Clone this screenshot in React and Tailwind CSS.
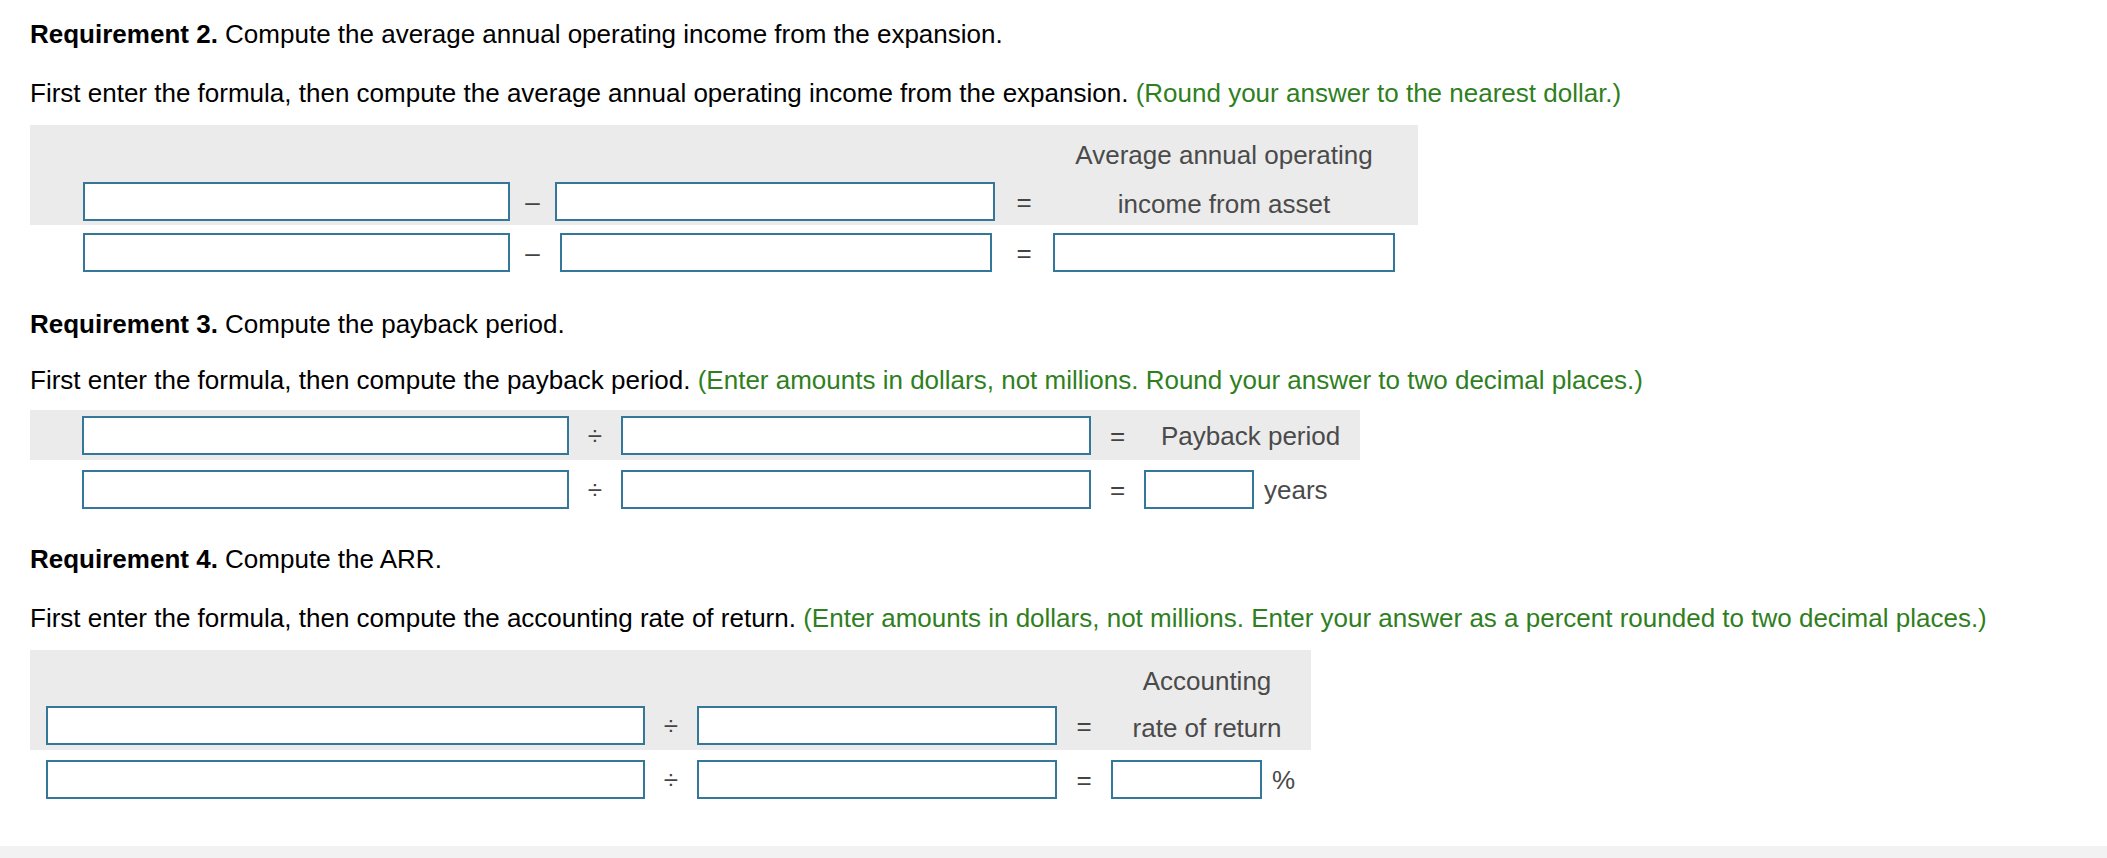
const box = 'h-[39px] border-2 border-[#357799] bg-white outline-none';
const op = 'flex items-center justify-center text-[#444]';
const label = 'text-[#4a4a4a] whitespace-nowrap';

function Input({ w = 'w-full', className = '' }) {
  return <input type="text" className={`${box} ${w} ${className}`} />;
}

function Heading({ num, task, note, after, gap = 'mt-[29px]' }) {
  return (
    <>
      <p>
        <span className="font-bold">Requirement {num}.</span> {task}
      </p>
      <p className={gap}>
        {after} <span className="text-[#2f7f1e]">{note}</span>
      </p>
    </>
  );
}

function Req2() {
  const cols = 'grid grid-cols-[427px_45px_440px_58px_342px]';
  return (
    <section>
      <Heading
        num="2"
        task="Compute the average annual operating income from the expansion."
        after="First enter the formula, then compute the average annual operating income from the expansion."
        note="(Round your answer to the nearest dollar.)"
      />
      <div className="mt-[17px] w-fit bg-[#ebebeb] pl-[53px] pr-[23px] pt-[15px] pb-[4px]">
        <div className={cols}>
          <div className="col-start-5 text-center mb-[12px]">
            <span className={label}>Average annual operating</span>
          </div>
          <Input className="col-start-1" />
          <div className={op}>–</div>
          <Input />
          <div className={op}>=</div>
          <div className={`${label} flex items-center justify-center pt-[4px]`}>income from asset</div>
        </div>
      </div>
      <div className={`${cols} mt-[8px] pl-[53px]`}>
        <Input />
        <div className={op}>–</div>
        <Input w="w-[432px]" className="ml-[5px]" />
        <div className={op}>=</div>
        <Input />
      </div>
    </section>
  );
}

function Req3() {
  const cols = 'grid grid-cols-[487px_52px_470px_53px_195px]';
  return (
    <section className="mt-[37px]">
      <Heading
        num="3"
        task="Compute the payback period."
        after="First enter the formula, then compute the payback period."
        note="(Enter amounts in dollars, not millions. Round your answer to two decimal places.)"
        gap="mt-[26px]"
      />
      <div className="mt-[15px] w-fit bg-[#ebebeb] pl-[52px] pr-[21px] pt-[6px] pb-[5px]">
        <div className={cols}>
          <Input />
          <div className={op}>÷</div>
          <Input />
          <div className={op}>=</div>
          <div className={`${label} flex items-center pl-[17px]`}>Payback period</div>
        </div>
      </div>
      <div className={`${cols} mt-[10px] pl-[52px]`}>
        <Input />
        <div className={op}>÷</div>
        <Input />
        <div className={op}>=</div>
        <div className="flex items-center gap-[10px]">
          <Input w="w-[110px]" />
          <span className={label}>years</span>
        </div>
      </div>
    </section>
  );
}

function Req4() {
  const cols = 'grid grid-cols-[599px_52px_360px_54px_192px]';
  return (
    <section className="mt-[35px]">
      <Heading
        num="4"
        task="Compute the ARR."
        after="First enter the formula, then compute the accounting rate of return."
        note="(Enter amounts in dollars, not millions. Enter your answer as a percent rounded to two decimal places.)"
      />
      <div className="mt-[17px] w-fit bg-[#ebebeb] pl-[16px] pr-[8px] pt-[16px] pb-[5px]">
        <div className={cols}>
          <div className="col-start-5 text-center mb-[10px]">
            <span className={label}>Accounting</span>
          </div>
          <Input className="col-start-1" />
          <div className={op}>÷</div>
          <Input />
          <div className={op}>=</div>
          <div className={`${label} flex items-center justify-center pt-[4px]`}>rate of return</div>
        </div>
      </div>
      <div className={`${cols} mt-[10px] pl-[16px]`}>
        <Input />
        <div className={op}>÷</div>
        <Input />
        <div className={op}>=</div>
        <div className="flex items-center gap-[10px]">
          <Input w="w-[151px]" />
          <span className={label}>%</span>
        </div>
      </div>
    </section>
  );
}

export default function App() {
  return (
    <div className="min-h-[858px] bg-white font-['Liberation_Sans',Arial,sans-serif] text-[26px] leading-[30px] text-black flex flex-col">
      <div className="px-[30px] pt-[19px]">
        <Req2 />
        <Req3 />
        <Req4 />
      </div>
      <div className="mt-[47px] flex-1 bg-[#f2f2f2]" />
    </div>
  );
}
